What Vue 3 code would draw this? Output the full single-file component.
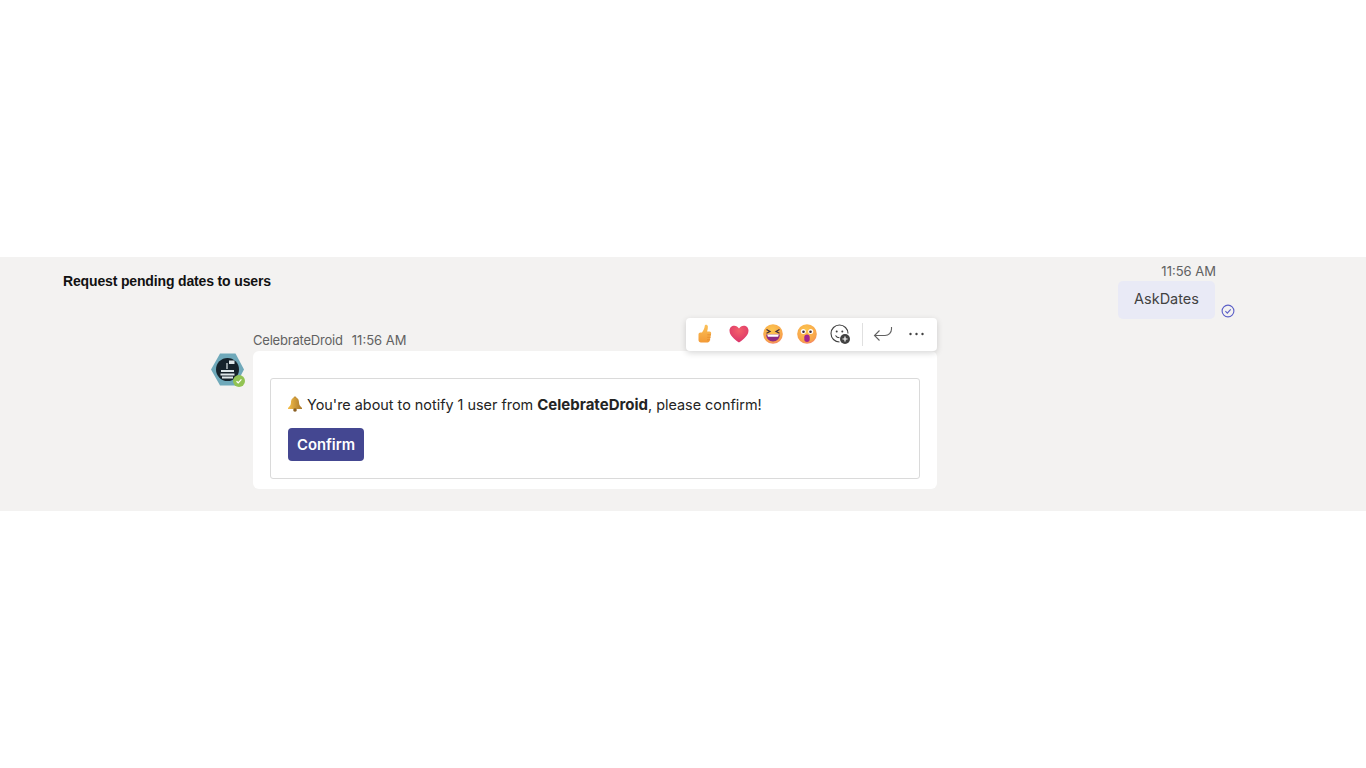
<script setup>
const reactions = ['thumb', 'heart', 'laugh', 'wow']
</script>

<template>
  <div class="page">
    <section class="band">
      <div class="top-row">
        <h1 class="title">Request pending dates to users</h1>
        <div class="sent">
          <div class="sent-col">
            <div class="sent-time">11:56 AM</div>
            <div class="bubble">AskDates</div>
          </div>
          <svg class="check" width="14" height="14" viewBox="0 0 14 14" fill="none">
            <circle cx="7" cy="7" r="5.9" stroke="#5b5fc7" stroke-width="1.1" />
            <path d="M4.4 7.2l1.9 1.9 3.4-3.7" stroke="#5b5fc7" stroke-width="1.1" />
          </svg>
        </div>
      </div>

      <div class="message">
        <div class="avatar">
          <svg width="33" height="33" viewBox="0 0 33 33">
            <path d="M9 .5h15.500l8.500 16-8.500 16H9l-9-16z" fill="#6fa9ba" />
            <circle cx="16.500" cy="16.500" r="11.500" fill="#16232b" />
            <path d="M10 17h13v2h-13zM9.500 20.500h14v2h-14zM11 23.500h11v2h-11z" fill="#dfe8ea" />
            <path d="M16 10v6" stroke="#dfe8ea" stroke-width="1.200" />
            <path d="M18 7.500h5.500v3.500H18z" fill="#dfe8ea" />
          </svg>
          <span class="status">
            <svg width="8" height="8" viewBox="0 0 8 8" fill="none">
              <path d="M1.500 4.200l1.700 1.600 3.200-3.500" stroke="#fff" stroke-width="1.200" />
            </svg>
          </span>
        </div>

        <div class="body">
          <div class="meta">
            <span class="name">CelebrateDroid</span>
            <span>11:56 AM</span>
          </div>

          <div class="toolbar">
            <span v-for="r in reactions" :key="r" class="tool">
              <svg v-if="r === 'thumb'" width="20" height="20" viewBox="0 0 20 20">
                <defs>
                  <linearGradient id="thumbFill" x1="0" y1="0" x2="0" y2="1">
                    <stop offset="0" stop-color="#fbc25a" />
                    <stop offset="1" stop-color="#f39a36" />
                  </linearGradient>
                </defs>
                <path d="M2.500 10.500c0-1.200.8-2 2-2h1.500c1.300-1.800 2.500-4.200 2.800-6.800.2-1.600 2.900-1.300 3.100.7.100 1.700-.3 3.500-.8 5.100h2.400c1.300 0 1.900 1.100 1.600 2.200l-1.300 6.900c-.2 1-1 1.900-2.200 1.900H5c-1.500 0-2.500-1-2.500-2.500z" fill="url(#thumbFill)" />
                <path d="M11.300 10.800h3.700M11.300 13.300h3.300M11 15.800h3.200" stroke="#e58a2c" stroke-width=".8" fill="none" />
              </svg>
              <svg v-else-if="r === 'heart'" width="20" height="20" viewBox="0 0 20 20">
                <defs>
                  <radialGradient id="heartFill" cx=".5" cy=".3" r=".85">
                    <stop offset="0" stop-color="#f4606a" />
                    <stop offset="1" stop-color="#d42a6a" />
                  </radialGradient>
                </defs>
                <path d="M10 18.500c-1-.8-9.500-6-9.500-11.800C.5 3.800 2.700 1.800 5.300 1.800 7.200 1.800 9 2.900 10 4.600c1-1.700 2.800-2.800 4.700-2.800 2.600 0 4.800 2 4.800 4.900 0 5.800-8.500 11-9.500 11.800z" fill="url(#heartFill)" />
              </svg>
              <svg v-else-if="r === 'laugh'" width="20" height="20" viewBox="0 0 20 20">
                <defs>
                  <radialGradient id="laughFill" cx=".45" cy=".3" r=".85">
                    <stop offset="0" stop-color="#fcc64e" />
                    <stop offset=".7" stop-color="#f8a24c" />
                    <stop offset="1" stop-color="#ee5c8f" />
                  </radialGradient>
                </defs>
                <circle cx="10" cy="10" r="9.800" fill="url(#laughFill)" />
                <path d="M3.500 5.500l3.500 2-3.500 1.700M16.500 5.500l-3.500 2 3.500 1.700" stroke="#3a2a3e" stroke-width="1.200" fill="none" />
                <path d="M3.200 10.500h13.600c0 4-2.900 7-6.800 7s-6.800-3-6.800-7z" fill="#8e2a80" />
                <path d="M4.200 10.500h11.600l-.7 2.200H4.900z" fill="#fff" />
              </svg>
              <svg v-else width="20" height="20" viewBox="0 0 20 20">
                <defs>
                  <radialGradient id="wowFill" cx=".45" cy=".3" r=".85">
                    <stop offset="0" stop-color="#fcc64e" />
                    <stop offset=".7" stop-color="#f8a24c" />
                    <stop offset="1" stop-color="#ee5c8f" />
                  </radialGradient>
                </defs>
                <circle cx="10" cy="10" r="9.800" fill="url(#wowFill)" />
                <circle cx="6.300" cy="7.500" r="2.500" fill="#fff" />
                <circle cx="13.700" cy="7.500" r="2.500" fill="#fff" />
                <circle cx="6.500" cy="7.700" r="1.300" fill="#3a2a3e" />
                <circle cx="13.500" cy="7.700" r="1.300" fill="#3a2a3e" />
                <rect x="7.300" y="10.500" width="5.400" height="7.500" rx="2.700" fill="#a3238e" />
              </svg>
            </span>
            <span class="tool">
              <svg width="20" height="20" viewBox="0 0 20 20" fill="none" stroke="#424242" stroke-width="1.100">
                <path d="M9.500 18a8.500 8.500 0 1 1 8.500-8.500" />
                <circle cx="6.700" cy="7.500" r="1" fill="#424242" stroke="none" />
                <circle cx="12.300" cy="7.500" r="1" fill="#424242" stroke="none" />
                <path d="M5.500 11.500c.9 1.500 2.300 2.300 4 2.300" />
                <circle cx="15" cy="15" r="5" fill="#424242" stroke="none" />
                <path d="M15 12.500v5M12.500 15h5" stroke="#fff" stroke-width="1.200" />
              </svg>
            </span>
            <span class="divider"></span>
            <span class="tool">
              <svg width="20" height="20" viewBox="0 0 20 20" fill="none" stroke="#616161" stroke-width="1.100">
                <path d="M18.500 3v2c0 3.500-2.800 6.500-6.500 6.500H1.500M6.500 6.500l-5 5 5 5" />
              </svg>
            </span>
            <span class="tool">
              <svg width="20" height="20" viewBox="0 0 20 20" fill="#424242">
                <circle cx="4.500" cy="10" r="1.200" />
                <circle cx="10.500" cy="10" r="1.200" />
                <circle cx="16.500" cy="10" r="1.200" />
              </svg>
            </span>
          </div>

          <div class="card">
            <div class="inner">
              <p class="notice">
                <svg class="bell" width="16" height="16" viewBox="0 0 16 16">
                  <defs>
                    <linearGradient id="bellFill" x1="0" y1="0" x2="1" y2="0">
                      <stop offset="0" stop-color="#f7c04a" />
                      <stop offset="1" stop-color="#a8772a" />
                    </linearGradient>
                  </defs>
                  <circle cx="8" cy="2" r="1.400" fill="#b98a35" />
                  <path d="M8 1.500c3 0 4 2.500 4 5 0 2.500 1.500 4 3 5.500v1H1v-1c1.500-1.500 3-3 3-5.500 0-2.500 1-5 4-5z" fill="url(#bellFill)" />
                  <circle cx="8" cy="14" r="1.800" fill="#8a5f22" />
                </svg>
                You're about to notify 1 user from <strong>CelebrateDroid</strong>, please confirm!
              </p>
              <button class="confirm">Confirm</button>
            </div>
          </div>
        </div>
      </div>
    </section>
  </div>
</template>

<style>
html, body {
  background: #fff;
}
</style>

<style scoped>
.page {
  height: 768px;
  padding-top: 257px;
  box-sizing: border-box;
  font-family: Inter, "Liberation Sans", sans-serif;
  overflow: hidden;
}
.band {
  height: 254px;
  background: #f3f2f1;
  box-sizing: border-box;
  padding-top: 7px;
}
.top-row {
  display: flex;
  justify-content: space-between;
  align-items: flex-start;
  height: 62px;
  padding-left: 63px;
  padding-right: 131px;
}
.title {
  margin: 9px 0 0;
  font: bold 14px/17px "Liberation Sans", sans-serif;
  letter-spacing: -0.15px;
  color: #111;
}
.sent {
  display: flex;
  align-items: flex-end;
}
.sent-col {
  display: flex;
  flex-direction: column;
  align-items: flex-end;
}
.sent-time {
  font-size: 13px;
  line-height: 15px;
  color: #616161;
  margin-right: -1px;
  margin-bottom: 2px;
}
.bubble {
  width: 97px;
  height: 38px;
  background: #e9eaf6;
  border-radius: 5px;
  font-size: 14.500px;
  line-height: 36px;
  text-align: center;
  color: #424242;
}
.check {
  margin-left: 6px;
  margin-bottom: 1px;
}
.message {
  display: flex;
  margin-left: 211px;
  gap: 9px;
}
.avatar {
  position: relative;
  width: 33px;
  height: 33px;
  margin-top: 27px;
}
.status {
  position: absolute;
  right: -1px;
  bottom: -1px;
  width: 12px;
  height: 12px;
  border-radius: 50%;
  background: #92c353;
  display: flex;
  align-items: center;
  justify-content: center;
}
.body {
  position: relative;
  width: 684px;
}
.meta {
  display: flex;
  gap: 9px;
  height: 25px;
  font-size: 13px;
  line-height: 15px;
  color: #616161;
  padding-top: 7px;
  box-sizing: border-box;
}
.name {
  letter-spacing: -0.2px;
}
.toolbar {
  position: absolute;
  top: -8px;
  right: 0;
  z-index: 1;
  width: 251px;
  height: 33px;
  box-sizing: border-box;
  padding: 0 0 1px 3px;
  background: #fff;
  border-radius: 4px;
  box-shadow: 0 2px 6px rgba(0, 0, 0, .16);
  display: flex;
  align-items: center;
}
.tool {
  width: 33.600px;
  height: 20px;
  display: flex;
  justify-content: center;
}
.divider {
  width: 1px;
  height: 23px;
  margin: 0 3px 0 5px;
  background: #e0e0e0;
}
.card {
  height: 138px;
  box-sizing: border-box;
  padding: 27px 17px 10px;
  background: #fff;
  border-radius: 6px;
}
.inner {
  height: 101px;
  box-sizing: border-box;
  border: 1px solid #dadada;
  border-radius: 3px;
  padding: 16px 17px;
}
.notice {
  margin: 0 0 13px;
  font-size: 14.400px;
  line-height: 20px;
  color: #242424;
  height: 20px;
}
.notice strong {
  font-weight: 700;
  font-size: 15px;
}
.bell {
  vertical-align: -2px;
  margin: 0 0 0 -1px;
}
.confirm {
  display: block;
  width: 76px;
  height: 33px;
  border: 0;
  border-radius: 4px;
  background: #444791;
  color: #fff;
  font: 600 14.800px Inter, "Liberation Sans", sans-serif;
  padding: 0;
}
</style>
